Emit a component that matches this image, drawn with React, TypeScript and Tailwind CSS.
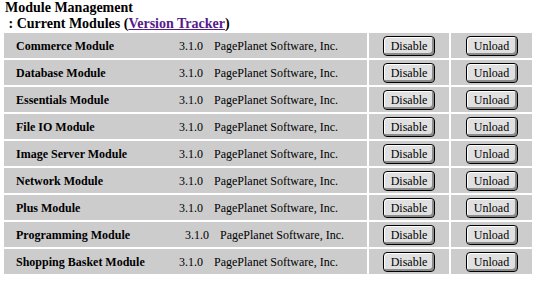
import React from 'react';

type Mod = { name: string; shift?: number };

const modules: Mod[] = [
  { name: 'Commerce Module' },
  { name: 'Database Module' },
  { name: 'Essentials Module' },
  { name: 'File IO Module' },
  { name: 'Image Server Module' },
  { name: 'Network Module' },
  { name: 'Plus Module' },
  { name: 'Programming Module', shift: 6 },
  { name: 'Shopping Basket Module' },
];

const OldButton = ({ label }: { label: string }) => (
  <button className="h-[20px] w-[52px] rounded-[4px] border border-black bg-[#e0e0e0] text-[12px] leading-none text-black shadow-[inset_1px_1px_0_#ffffff,inset_-2px_-2px_0_#8c8c8c] font-['Liberation_Serif',serif]">
    {label}
  </button>
);

export default function App() {
  return (
    <div className="min-h-[283px] w-[535px] bg-white font-['Liberation_Serif',serif] text-black">
      <div className="pl-[5px] text-[14px] font-bold leading-[16px]">
        <div>Module Management</div>
        <div>
          &nbsp;: Current Modules (
          <a href="#" className="text-[#551a8b] underline">
            Version Tracker
          </a>
          )
        </div>
      </div>

      <div className="ml-[4px] mt-[1px] grid grid-cols-[363px_80px_81px] gap-[2px]">
        {modules.map((m) => (
          <React.Fragment key={m.name}>
            <div className="flex h-[25px] items-center bg-[#cccccc] pl-[12px] pt-[1px] text-[12px]">
              <span className="font-bold" style={{ width: 163 + (m.shift ?? 0) }}>
                {m.name}
              </span>
              <span className="w-[35px]">3.1.0</span>
              <span>PagePlanet Software, Inc.</span>
            </div>
            <div className="flex h-[25px] items-center justify-center bg-[#cccccc]">
              <OldButton label="Disable" />
            </div>
            <div className="flex h-[25px] items-center justify-center bg-[#cccccc]">
              <OldButton label="Unload" />
            </div>
          </React.Fragment>
        ))}
      </div>
    </div>
  );
}
